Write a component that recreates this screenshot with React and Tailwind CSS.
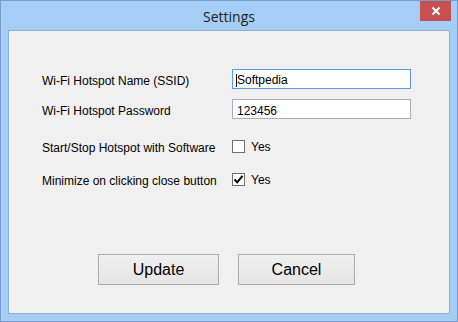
import React from 'react';

const font = { fontFamily: '"Liberation Sans", Arial, sans-serif' };

const Check = ({ checked }) => (
  <span className="w-[13px] h-[13px] border border-[#707070] bg-white flex items-center justify-center shrink-0">
    {checked && (
      <svg width="11" height="11" viewBox="0 0 11 11">
        <path d="M1.5 5.5 L4.2 8.3 L9.5 1.8" fill="none" stroke="#000" strokeWidth="2" />
      </svg>
    )}
  </span>
);

export default function App() {
  return (
    <div className="w-[458px] h-[322px] border border-[#7a9ccb] bg-[#a5cdf6] flex flex-col" style={font}>
      {/* Title bar */}
      <div className="relative h-[29px] flex items-center justify-center shrink-0">
        <span className="text-[14px] text-[#1e1e1e] pt-[1px]" style={{ fontFamily: '"Open Sans", "Noto Sans", sans-serif' }}>Settings</span>
        <button className="absolute top-0 right-[6px] w-[31px] h-[20px] bg-[#c75050] flex items-center justify-center">
          <svg width="10" height="10" viewBox="0 0 10 10">
            <path d="M1.5 1.5 L8.5 8.5 M8.5 1.5 L1.5 8.5" stroke="#fff" strokeWidth="2" />
          </svg>
        </button>
      </div>

      {/* Client area */}
      <div className="flex-1 mx-[7px] mb-[7px] border border-[#8fb0d6] bg-[#f0f0f0] flex flex-col pl-[33px] pt-[38px] text-[12px] text-black">
        <div className="flex items-center h-[20px]">
          <span className="w-[190px] pt-[4px]">Wi-Fi Hotspot Name (SSID)</span>
          <div className="w-[179px] h-[20px] border border-[#569de5] bg-white flex items-center pl-[3px] pt-[3px]">
            <span className="border-l border-black leading-[13px]">Softpedia</span>
          </div>
        </div>
        <div className="flex items-center h-[20px] mt-[10px]">
          <span className="w-[190px] pt-[4px]">Wi-Fi Hotspot Password</span>
          <div className="w-[179px] h-[20px] border border-[#abadb3] bg-white flex items-center pl-[4px] pt-[3px]">
            123456
          </div>
        </div>
        <div className="flex items-center h-[20px] mt-[17px]">
          <span className="w-[190px] pt-[3px]">Start/Stop Hotspot with Software</span>
          <Check />
          <span className="ml-[6px] pt-[2px]">Yes</span>
        </div>
        <div className="flex items-center h-[20px] mt-[13px]">
          <span className="w-[190px] pt-[3px]">Minimize on clicking close button</span>
          <Check checked />
          <span className="ml-[6px] pt-[2px]">Yes</span>
        </div>

        <div className="flex mt-[65px] ml-[56px] gap-[19px]">
          <button className="w-[121px] h-[31px] border border-[#acacac] bg-gradient-to-b from-[#f0f0f0] to-[#e5e5e5] text-[16px] text-black">Update</button>
          <button className="w-[117px] h-[31px] border border-[#acacac] bg-gradient-to-b from-[#f0f0f0] to-[#e5e5e5] text-[16px] text-black">Cancel</button>
        </div>
      </div>
    </div>
  );
}
